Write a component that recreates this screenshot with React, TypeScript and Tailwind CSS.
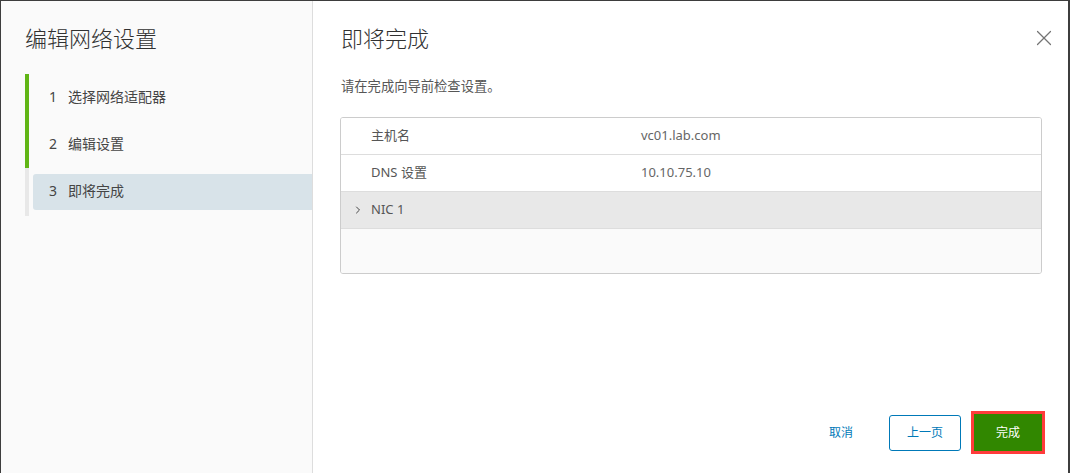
import { X, ChevronRight } from "lucide-react";

const steps = [
  { n: 1, label: "选择网络适配器", done: true },
  { n: 2, label: "编辑设置", done: true },
  { n: 3, label: "即将完成", done: false, active: true },
];

const rows = [
  { k: "主机名", v: "vc01.lab.com" },
  { k: "DNS 设置", v: "10.10.75.10" },
];

export default function App() {
  return (
    <div
      className="h-[473px] w-[1071px] bg-white pr-px overflow-hidden"
      style={{ fontFamily: '"Noto Sans", "Noto Sans CJK SC", sans-serif' }}
    >
      <div className="flex h-full border-l border-t border-r-2 border-[#3d3d3d] bg-white">
        {/* sidebar */}
        <div className="w-[312px] shrink-0 border-r border-[#dddddd] bg-[#fafafa] pl-6">
          <h2 className="pt-[22px] text-[22px] font-light leading-[30px] text-[#313131]">编辑网络设置</h2>
          <div className="mt-[21px]">
            {steps.map((s, i) => (
              <div
                key={s.n}
                className={`border-l-4 pt-[6px] ${i === 2 ? "pb-[6px]" : "pb-[5px]"} ${s.done ? "border-[#60b515]" : "border-[#e8e8e8]"}`}
              >
                <div
                  className={`ml-1 flex h-9 items-center rounded-l-[3px] pb-[3px] pl-4 text-[14px] text-[#454545] ${s.active ? "bg-[#d8e3e9]" : ""}`}
                >
                  <span className="w-[19px]">{s.n}</span>
                  <span>{s.label}</span>
                </div>
              </div>
            ))}
          </div>
        </div>

        {/* main */}
        <div className="relative flex flex-1 flex-col pl-[27px] pr-[26px]">
          <button className="absolute right-[11px] top-[24px] text-[#747474]">
            <X size={26} strokeWidth={1.1} />
          </button>
          <h3 className="ml-px pt-[22px] text-[22px] font-light leading-[30px] text-[#313131]">即将完成</h3>
          <p className="ml-px mt-[23px] text-[13.3px] leading-5 text-[#565656]">请在完成向导前检查设置。</p>

          <div className="mt-[21px] overflow-hidden rounded-[3px] border border-[#cccccc] text-[13px] text-[#565656]">
            {rows.map((r) => (
              <div key={r.k} className="flex h-[37px] items-center border-b border-[#dddddd] bg-white">
                <span className="w-[300px] pl-[30px]">{r.k}</span>
                <span className="text-[#666666]">{r.v}</span>
              </div>
            ))}
            <div className="flex h-[37px] items-center border-b border-[#dddddd] bg-[#e8e8e8]">
              <ChevronRight size={12} strokeWidth={2} className="ml-[11px] text-[#454545]" />
              <span className="ml-[7px]">NIC 1</span>
            </div>
            <div className="h-[44px] bg-[#fafafa]" />
          </div>

          <div className="mt-auto mb-[22px] flex items-center justify-end">
            <button className="mr-9 text-[12px] text-[#0079b8]">取消</button>
            <button className="h-9 w-[72px] rounded-[3px] border border-[#0079b8] text-[12px] text-[#0079b8]">
              上一页
            </button>
            <button className="ml-[13px] h-[37px] w-[68px] bg-[#318700] text-[12px] text-white outline-3 outline-[#ff3b3b]">
              完成
            </button>
          </div>
        </div>
      </div>
    </div>
  );
}
